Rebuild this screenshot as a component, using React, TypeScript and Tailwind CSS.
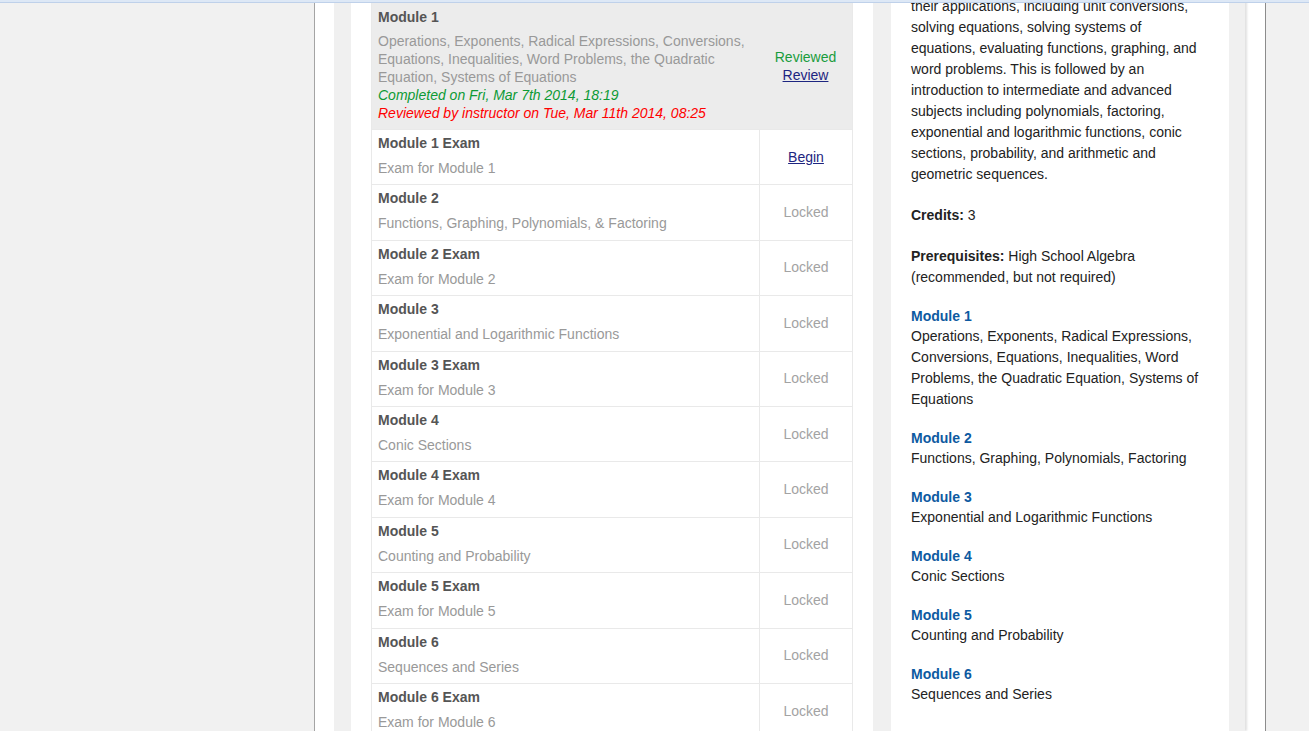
import React from "react";

type Row = { title: string; sub: string; status: "begin" | "locked" };

const rows: Row[] = [
  { title: "Module 1 Exam", sub: "Exam for Module 1", status: "begin" },
  { title: "Module 2", sub: "Functions, Graphing, Polynomials, & Factoring", status: "locked" },
  { title: "Module 2 Exam", sub: "Exam for Module 2", status: "locked" },
  { title: "Module 3", sub: "Exponential and Logarithmic Functions", status: "locked" },
  { title: "Module 3 Exam", sub: "Exam for Module 3", status: "locked" },
  { title: "Module 4", sub: "Conic Sections", status: "locked" },
  { title: "Module 4 Exam", sub: "Exam for Module 4", status: "locked" },
  { title: "Module 5", sub: "Counting and Probability", status: "locked" },
  { title: "Module 5 Exam", sub: "Exam for Module 5", status: "locked" },
  { title: "Module 6", sub: "Sequences and Series", status: "locked" },
  { title: "Module 6 Exam", sub: "Exam for Module 6", status: "locked" },
];

const outline = [
  {
    name: "Module 1",
    text: "Operations, Exponents, Radical Expressions, Conversions, Equations, Inequalities, Word Problems, the Quadratic Equation, Systems of Equations",
  },
  { name: "Module 2", text: "Functions, Graphing, Polynomials, Factoring" },
  { name: "Module 3", text: "Exponential and Logarithmic Functions" },
  { name: "Module 4", text: "Conic Sections" },
  { name: "Module 5", text: "Counting and Probability" },
  { name: "Module 6", text: "Sequences and Series" },
];

function ModuleRow({ row }: { row: Row }) {
  return (
    <div className="grid grid-cols-[1fr_93px] border-t border-[#e9e9e9]">
      <div className="pl-[6px] pt-[3px] pb-[7.4px]">
        <div className="font-bold text-[#555555] leading-[20px]">{row.title}</div>
        <div className="mt-[6px] leading-[18px] text-[#999999]">{row.sub}</div>
      </div>
      <div className="flex items-center justify-center border-l border-[#e9e9e9]">
        {row.status === "begin" ? (
          <a href="#" className="text-[#1d2580] underline">
            Begin
          </a>
        ) : (
          <span className="text-[#a3a3a3]">Locked</span>
        )}
      </div>
    </div>
  );
}

export default function App() {
  return (
    <div
      className="relative h-screen overflow-hidden bg-[#f1f1f1] text-[14px]"
      style={{ fontFamily: '"Liberation Sans", Arial, sans-serif' }}
    >
      <div className="absolute inset-x-0 top-0 z-10 h-[3px] border-b border-[#bfd1ea] bg-[#dde8f6]" />

      <div className="ml-[314px] flex h-full w-[952px] border-l border-r border-l-[#a4a4a4] border-r-[#8c8c8c] bg-white pl-[19px] pr-[18px]">
        <div className="flex h-full w-[911px] bg-[#f0f0f0] pl-[17px] pr-[16px] shadow-[2px_0_2px_rgba(0,0,0,0.12)]">
          {/* course modules table */}
          <div className="h-full w-[522px] bg-white px-[20px] pt-[3px]">
            <div className="border-x border-[#e9e9e9]">
              <div className="grid grid-cols-[1fr_93px] bg-[#ececec]">
                <div className="pl-[6px] pt-[4px] pb-[7px]">
                  <div className="font-bold text-[#555555] leading-[20px]">Module 1</div>
                  <div className="mt-[5px] leading-[18px] text-[#999999]">
                    Operations, Exponents, Radical Expressions, Conversions, Equations, Inequalities, Word Problems, the
                    Quadratic Equation, Systems of Equations
                  </div>
                  <div className="leading-[18px] italic text-[#0d9a35]">Completed on Fri, Mar 7th 2014, 18:19</div>
                  <div className="leading-[18px] italic text-[#ff0000]">
                    Reviewed by instructor on Tue, Mar 11th 2014, 08:25
                  </div>
                </div>
                <div className="flex flex-col items-center justify-center leading-[18px]">
                  <span className="text-[#1a9c3c]">Reviewed</span>
                  <a href="#" className="text-[#1d2580] underline">
                    Review
                  </a>
                </div>
              </div>
              {rows.map((r) => (
                <ModuleRow key={r.title} row={r} />
              ))}
            </div>
          </div>

          <div className="w-[18px]" />

          {/* course description */}
          <div className="h-full w-[338px] bg-white px-[20px] text-[#222222] leading-[21px]">
            <p className="-mt-[4.5px]">
              their applications, including unit conversions, solving equations, solving systems of equations,
              evaluating functions, graphing, and word problems. This is followed by an introduction to intermediate
              and advanced subjects including polynomials, factoring, exponential and logarithmic functions, conic
              sections, probability, and arithmetic and geometric sequences.
            </p>
            <p className="mt-[20px]">
              <span className="font-bold">Credits:</span> 3
            </p>
            <p className="mt-[20px]">
              <span className="font-bold">Prerequisites:</span> High School Algebra (recommended, but not required)
            </p>
            {outline.map((m) => (
              <div key={m.name} className="mt-[19px]">
                <div className="font-bold text-[#0d5aa1] leading-[19px]">{m.name}</div>
                <div>{m.text}</div>
              </div>
            ))}
          </div>
        </div>
      </div>
    </div>
  );
}
